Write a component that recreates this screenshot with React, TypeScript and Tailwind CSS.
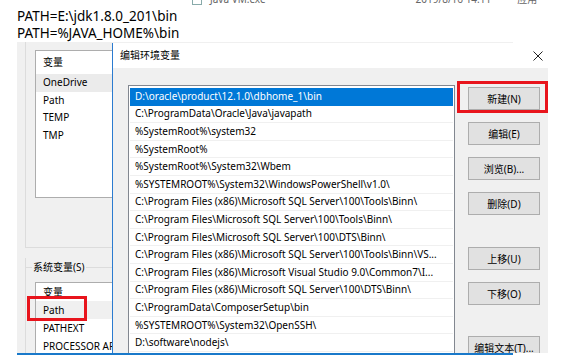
import React from 'react';

const paths = [
  'D:\\oracle\\product\\12.1.0\\dbhome_1\\bin',
  'C:\\ProgramData\\Oracle\\Java\\javapath',
  '%SystemRoot%\\system32',
  '%SystemRoot%',
  '%SystemRoot%\\System32\\Wbem',
  '%SYSTEMROOT%\\System32\\WindowsPowerShell\\v1.0\\',
  'C:\\Program Files (x86)\\Microsoft SQL Server\\100\\Tools\\Binn\\',
  'C:\\Program Files\\Microsoft SQL Server\\100\\Tools\\Binn\\',
  'C:\\Program Files\\Microsoft SQL Server\\100\\DTS\\Binn\\',
  'C:\\Program Files (x86)\\Microsoft SQL Server\\100\\Tools\\Binn\\VS...',
  'C:\\Program Files (x86)\\Microsoft Visual Studio 9.0\\Common7\\I...',
  'C:\\Program Files (x86)\\Microsoft SQL Server\\100\\DTS\\Binn\\',
  'C:\\ProgramData\\ComposerSetup\\bin',
  '%SYSTEMROOT%\\System32\\OpenSSH\\',
  'D:\\software\\nodejs\\',
];

const WinButton = ({ label, className = '' }: { label: string; className?: string }) => (
  <button className={`w-[72px] h-[23px] shrink-0 bg-[#e1e1e1] border border-[#adadad] text-[10px] text-black leading-none whitespace-nowrap ${className}`}>
    {label}
  </button>
);

// the variables dialog lying behind
const VariablesWindow = () => (
  <div className="absolute left-[17px] top-[42px] w-[496px] h-[311px] bg-[#f0f0f0] overflow-hidden text-[10px]">
    <div className="ml-[8px] h-[206px] border-l border-b border-[#dcdcdc] pt-[8px] pl-[9px]">
      <div className="h-[148px] bg-white border border-[#adadad] border-r-0">
        <div className="h-[23px] pl-[7px] flex items-center">变量</div>
        {['OneDrive', 'Path', 'TEMP', 'TMP'].map((v, i) => (
          <div key={v} className={`h-[17.5px] pl-[7px] flex items-center ${i === 0 ? 'bg-[#ebebeb]' : ''}`}>
            {v}
          </div>
        ))}
      </div>
    </div>
    <div className="mt-[19px] ml-[8px] border-l border-[#dcdcdc] h-[200px]">
      <div className="flex items-center h-[18px] -mt-[9px]">
        <div className="w-[6px] border-t border-[#dcdcdc]" />
        <span className="px-[1px] text-black">系统变量(S)</span>
        <div className="flex-1 border-t border-[#dcdcdc]" />
      </div>
      <div className="mt-[6px] ml-[9px] h-[100px] bg-white border border-[#adadad] border-r-0 border-b-0">
        <div className="h-[18px] pl-[7px] flex items-center">变量</div>
        {['Path', 'PATHEXT', 'PROCESSOR ARCHITECTURE'].map((v, i) => (
          <div key={v} className={`h-[18px] pl-[7px] flex items-center whitespace-nowrap ${i === 0 ? 'bg-[#f0f0f0]' : ''}`}>
            {v}
          </div>
        ))}
      </div>
    </div>
  </div>
);

const EditDialog = () => (
  <div className="absolute left-[112px] top-[43px] w-[436px] h-[310px] border-l border-[#2b7bd0] bg-[#f0f0f0] flex flex-col text-[10px]">
    <div className="h-[25px] bg-white flex items-center justify-between pl-[7px] pr-[5px]">
      <span className="text-black">编辑环境变量</span>
      <svg width="10" height="10" viewBox="0 0 10 10">
        <path d="M0.5 0.5 L9.5 9.5 M9.5 0.5 L0.5 9.5" stroke="#222" strokeWidth="1" />
      </svg>
    </div>
    <div className="flex-1 flex pl-[15px] overflow-hidden">
      <div className="mt-[17px] w-[327px] h-[300px] bg-white border border-[#828790] px-[1px] pt-[2px] overflow-hidden">
        {paths.map((p, i) => (
          <div
            key={i}
            className={`h-[17.6px] pl-[5px] flex items-center whitespace-nowrap overflow-hidden border-b ${
              i === 0 ? 'bg-[#0078d7] text-white border-[#0078d7]' : 'text-black border-[#f0f0f0]'
            }`}
          >
            {p}
          </div>
        ))}
      </div>
      <div className="ml-[13px] pt-[19px] flex flex-col">
        <WinButton label="新建(N)" />
        <WinButton label="编辑(E)" className="mt-[12px]" />
        <WinButton label="浏览(B)..." className="mt-[12px]" />
        <WinButton label="删除(D)" className="mt-[12px]" />
        <WinButton label="上移(U)" className="mt-[32px]" />
        <WinButton label="下移(O)" className="mt-[12px]" />
        <WinButton label="编辑文本(T)..." className="mt-[31px]" />
      </div>
    </div>
  </div>
);

export default function App() {
  return (
    <div className="relative w-[573px] h-[356px] overflow-hidden bg-white text-black font-['Noto_Sans','Noto_Sans_CJK_SC',sans-serif]">
      {/* cut-off explorer row at the very top */}
      <div className="h-[5px] overflow-hidden">
        <div className="-mt-[8px] flex items-center text-[10px] text-[#666] whitespace-nowrap">
          <div className="ml-[192px] w-[10px] h-[10px] border border-[#8aa]" />
          <span className="ml-[8px]">Java VM.exe</span>
          <span className="ml-[150px]">2019/8/16 14:11</span>
          <span className="ml-[26px]">应用</span>
        </div>
      </div>
      <div className="pl-[17px] pt-[3px] text-[13.5px] leading-[17px]">
        <div>PATH=E:\jdk1.8.0_201\bin</div>
        <div>PATH=%JAVA_HOME%\bin</div>
      </div>

      <VariablesWindow />
      <EditDialog />

      {/* annotations */}
      <div className="absolute left-[457px] top-[81px] w-[91px] h-[32px] border-[3px] border-[#e8141c]" />
      <div className="absolute left-[27px] top-[296px] w-[60px] h-[25px] border-[3px] border-[#e8141c]" />
      <div className="absolute left-[17px] top-[353px] w-[496px] h-[2px] bg-[#1979ca]" />
    </div>
  );
}
